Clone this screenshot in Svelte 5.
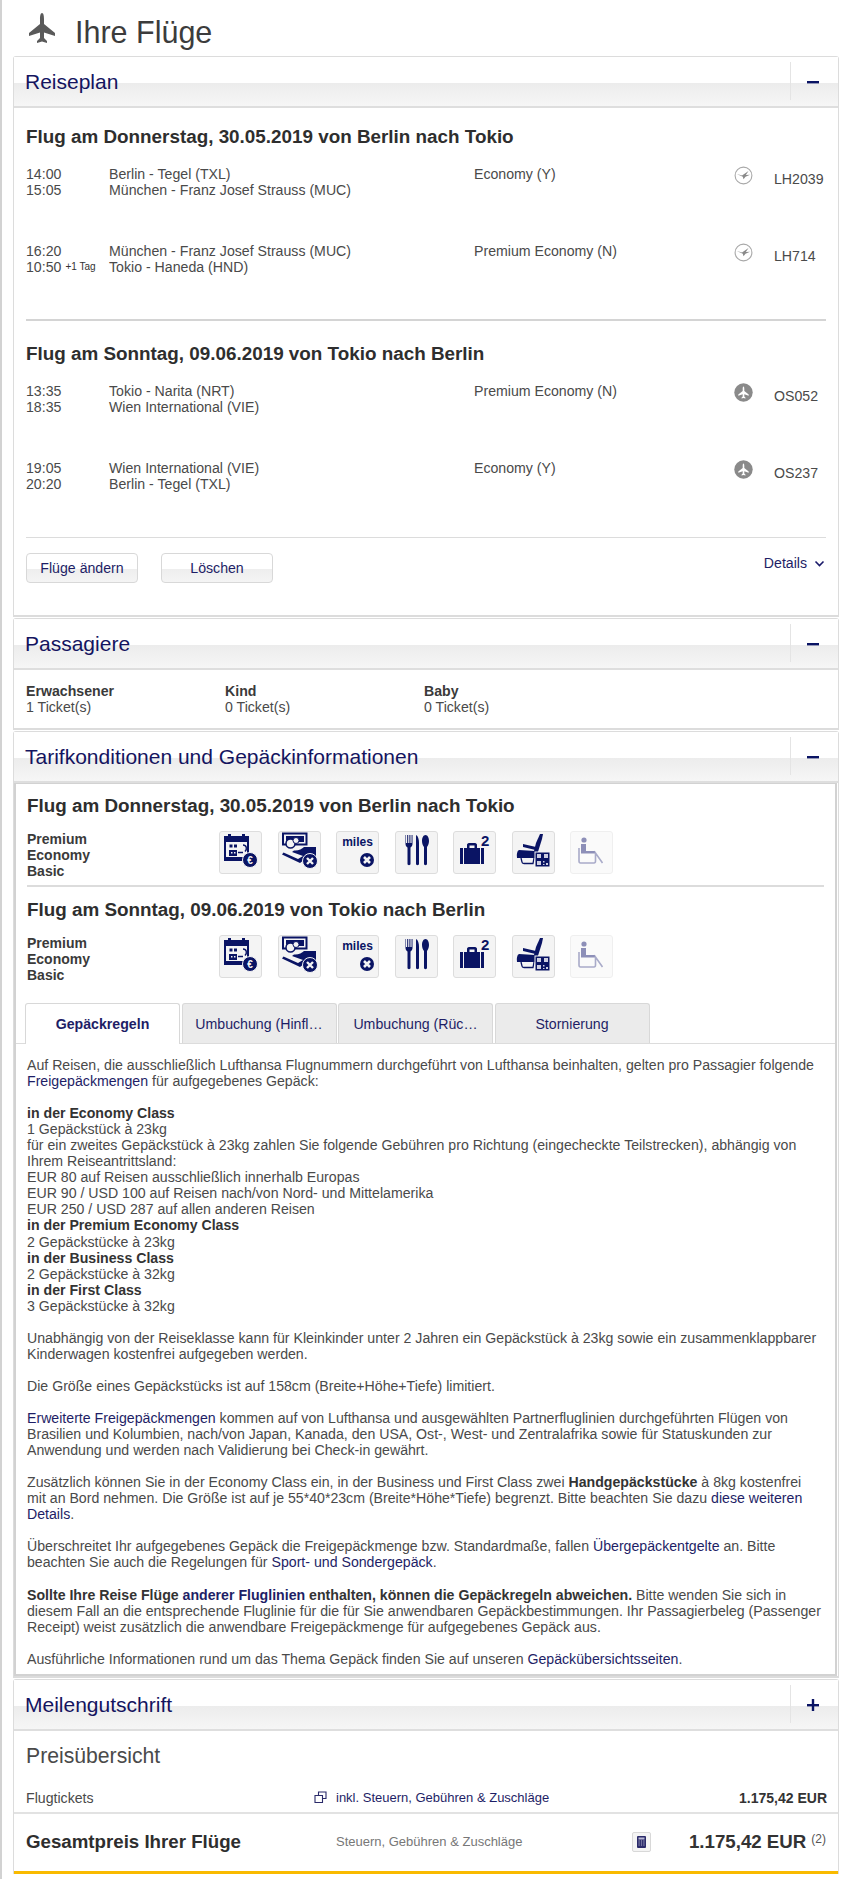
<script lang="ts">
	// Flight summary page: itinerary, passengers, fare rules, price
	const outbound = [
		{ dep: '14:00', arr: '15:05', from: 'Berlin - Tegel (TXL)', to: 'München - Franz Josef Strauss (MUC)', cabin: 'Economy (Y)', no: 'LH2039', carrier: 'lh' },
		{ dep: '16:20', arr: '10:50', plus: '+1 Tag', from: 'München - Franz Josef Strauss (MUC)', to: 'Tokio - Haneda (HND)', cabin: 'Premium Economy (N)', no: 'LH714', carrier: 'lh' }
	];
	const inbound = [
		{ dep: '13:35', arr: '18:35', from: 'Tokio - Narita (NRT)', to: 'Wien International (VIE)', cabin: 'Premium Economy (N)', no: 'OS052', carrier: 'os' },
		{ dep: '19:05', arr: '20:20', from: 'Wien International (VIE)', to: 'Berlin - Tegel (TXL)', cabin: 'Economy (Y)', no: 'OS237', carrier: 'os' }
	];
	const passengers = [
		{ label: 'Erwachsener', count: '1 Ticket(s)' },
		{ label: 'Kind', count: '0 Ticket(s)' },
		{ label: 'Baby', count: '0 Ticket(s)' }
	];
	const tabs = ['Gepäckregeln', 'Umbuchung (Hinfl…', 'Umbuchung (Rüc…', 'Stornierung'];
	const planePath = 'M13 0C14.5 0 15 3 15 6V11L26 20V23L15 19.5V25L18 28V30L13 28.5 8 30V28L11 25V19.5L0 23V20L11 11V6C11 3 11.5 0 13 0Z';
</script>

{#snippet panelHead(title, sign)}
	<div class="panel-head">
		<h2>{title}</h2>
		<div class="toggle">
			<svg width="14" height="14" viewBox="0 0 14 14">
				<rect x="1" y="6" width="12" height="2.4" fill="#0a1464" />
				{#if sign === '+'}<rect x="5.8" y="1" width="2.4" height="12" fill="#0a1464" />{/if}
			</svg>
		</div>
	</div>
{/snippet}

{#snippet flightRows(rows)}
	<div class="flight-rows">
		{#each rows as r}
			<div class="flight-row">
				<div class="times">
					<div>{r.dep}</div>
					<div>{r.arr}{#if r.plus}<span class="plus">{r.plus}</span>{/if}</div>
				</div>
				<div>
					<div>{r.from}</div>
					<div>{r.to}</div>
				</div>
				<div>{r.cabin}</div>
				<div class="logo">
					{#if r.carrier === 'lh'}
						<svg width="19" height="19" viewBox="0 0 19 19">
							<circle cx="9.5" cy="9.5" r="8.4" fill="#fff" stroke="#a8a8a8" stroke-width="1.1" />
							<path d="M2.8 8 8 9.6 14.500 5 11.800 9 16 8.800 11.500 10.800 9.500 13.200 8.800 10.800Z" fill="#8a8a8a" />
						</svg>
					{:else}
						<svg width="19" height="19" viewBox="0 0 19 19">
							<circle cx="9.5" cy="9.5" r="9.2" fill="#8a8a8a" />
							<path d={planePath} fill="#fff" transform="translate(4.3 3.5) scale(.4)" />
						</svg>
					{/if}
				</div>
				<div class="flight-no">{r.no}</div>
			</div>
		{/each}
	</div>
{/snippet}

{#snippet fareIcons()}
	<div class="fare-icons">
		<div class="fare-icon">
			<svg viewBox="0 0 43 43">
				<path d="M5 5H9V3H12V5H23V3H26V5H30V24H25V30H5Z" fill="#0a1464" />
				<rect x="7" y="11" width="21" height="15" fill="#f4f4f4" />
				<rect x="10.500" y="13.500" width="3" height="3" fill="#0a1464" /><rect x="15" y="13.500" width="3" height="3" fill="#0a1464" />
				<path d="M10 19H18V25H10Z" fill="#0a1464" />
				<rect x="12" y="21" width="1.500" height="1.500" fill="#f4f4f4" /><rect x="15" y="21" width="1.500" height="1.500" fill="#f4f4f4" />
				<path d="M19 21.500h5M24 14c3.500 0 4.500 4 2 6.500" fill="none" stroke="#0a1464" stroke-width="1.400" />
				<circle cx="31" cy="29" r="7.500" fill="#0a1464" stroke="#f4f4f4" />
				<text x="31" y="32.800" class="euro">€</text>
			</svg>
		</div>
		<div class="fare-icon">
			<svg viewBox="0 0 43 43">
				<path d="M5 2.500h23.500v11H5Z" fill="none" stroke="#0a1464" stroke-width="2" />
				<rect x="8" y="5" width="18" height="6" fill="#0a1464" />
				<circle cx="12.500" cy="12.500" r="4.500" fill="#f4f4f4" stroke="#0a1464" stroke-width="1.500" />
				<circle cx="18" cy="9.500" r="3" fill="#f4f4f4" stroke="#0a1464" stroke-width="1" />
				<path d="M38 16V26H30L22 32 4 23.500 5.500 21.500 20 28 25 25 14 21 16 19.500C20 20 24 18 26 16Z" fill="#0a1464" />
				<circle cx="32" cy="30" r="7.500" fill="#0a1464" stroke="#f4f4f4" />
				<path d="M29 27l6 6M35 27l-6 6" stroke="#f4f4f4" stroke-width="2.400" />
			</svg>
		</div>
		<div class="fare-icon">
			<svg viewBox="0 0 43 43">
				<text x="21.500" y="15" class="miles">miles</text>
				<circle cx="31" cy="29" r="7" fill="#0a1464" />
				<path d="M28 26l6 6M34 26l-6 6" stroke="#f4f4f4" stroke-width="2.600" />
			</svg>
		</div>
		<div class="fare-icon">
			<svg viewBox="0 0 43 43">
				<path d="M11 4v8h1.200V4h1V12h1.200V4h1V12h1.200V4h.9v9c0 2-1.300 3-2 3.500V33c0 1.500-3 1.500-3 0V16.500c-.8-.5-2-1.500-2-3.500V4Z" fill="#0a1464" />
				<path d="M21 4c2 1 3 4 3 8v21c0 1.500-3 1.500-3 0Z" fill="#0a1464" />
				<path d="M30.500 4c2.200 0 3.500 3 3.500 6s-1.300 5-2 6v17c0 1.500-3 1.500-3 0V16c-.8-1-2-3-2-6s1.300-6 3.500-6Z" fill="#0a1464" />
			</svg>
		</div>
		<div class="fare-icon">
			<svg viewBox="0 0 43 43">
				<path d="M14 17v-3c0-1 .7-2 2-2h6c1.300 0 2 1 2 2v3h7v16H7V17Zm2.500 0h5v-2.500h-5Z" fill="#0a1464" fill-rule="evenodd" />
				<path d="M10.500 17v16M27.500 17v16" stroke="#f4f4f4" stroke-width="1" />
				<text x="28" y="15" class="two">2</text>
			</svg>
		</div>
		<div class="fare-icon">
			<svg viewBox="0 0 43 43">
				<path d="M28 3H31L30 8 25 24H21L24 12Z" fill="#0a1464" />
				<path d="M11 13 24 16 23.500 19 11 16Z" fill="#0a1464" />
				<path d="M7 19 23 20V27H5C4.500 23 5 20 7 19Z" fill="#0a1464" />
				<path d="M9 27 10 31C10 32 11 32.500 12 32.500H21L22 27" fill="none" stroke="#0a1464" stroke-width="1.300" />
				<rect x="23" y="21" width="15" height="15" fill="#0a1464" stroke="#f4f4f4" />
				<path d="M25 23h4v4h-4ZM32 23h4v4h-4ZM25 30h4v4h-4ZM31 30h1.500v1.500H31ZM34 32h2v2h-2ZM31 33h1.500v1H31Z" fill="#cfd0e2" />
			</svg>
		</div>
		<div class="fare-icon off">
			<svg viewBox="0 0 43 43">
				<circle cx="14" cy="9" r="2.600" fill="#8d8fb8" />
				<path d="M11 13h5v7h9v2.500H11Z" fill="#8d8fb8" />
				<path d="M9 17v13c0 1 .5 2 1.500 2H24c1 0 1.500-1 1.500-2v-8l7 10" fill="none" stroke="#a9abc9" stroke-width="1.600" />
			</svg>
		</div>
	</div>
{/snippet}

<div class="page">
	<header class="page-title">
		<svg width="26" height="30" viewBox="0 0 26 30"><path d={planePath} fill="#5a5a5a" /></svg>
		<h1>Ihre Flüge</h1>
	</header>

	<section class="panel">
		{@render panelHead('Reiseplan', '-')}
		<div class="plan">
			<h3>Flug am Donnerstag, 30.05.2019 von Berlin nach Tokio</h3>
			{@render flightRows(outbound)}
			<hr class="thick" />
			<h3>Flug am Sonntag, 09.06.2019 von Tokio nach Berlin</h3>
			{@render flightRows(inbound)}
			<hr class="thin" />
			<div class="actions">
				<button>Flüge ändern</button>
				<button>Löschen</button>
				<a class="details">Details
					<svg width="11" height="8" viewBox="0 0 11 8"><path d="M1.500 1.500 5.500 5.500 9.500 1.500" fill="none" stroke="#1a1a6a" stroke-width="1.600" /></svg>
				</a>
			</div>
		</div>
	</section>

	<section class="panel">
		{@render panelHead('Passagiere', '-')}
		<div class="pax">
			{#each passengers as p}
				<div><strong>{p.label}</strong><br />{p.count}</div>
			{/each}
		</div>
	</section>

	<section class="panel">
		{@render panelHead('Tarifkonditionen und Gepäckinformationen', '-')}
		<div class="fare">
			<h3>Flug am Donnerstag, 30.05.2019 von Berlin nach Tokio</h3>
			<div class="fare-row">
				<div class="fare-name">Premium<br />Economy<br />Basic</div>
				{@render fareIcons()}
			</div>
			<hr class="thin fare-rule" />
			<h3>Flug am Sonntag, 09.06.2019 von Tokio nach Berlin</h3>
			<div class="fare-row">
				<div class="fare-name">Premium<br />Economy<br />Basic</div>
				{@render fareIcons()}
			</div>

			<div class="tabs">
				{#each tabs as t, i}
					<div class="tab" class:active={i === 0}>{t}</div>
				{/each}
			</div>

			<div class="rules">
				<p>Auf Reisen, die ausschließlich Lufthansa Flugnummern durchgeführt von Lufthansa beinhalten, gelten pro Passagier folgende <a>Freigepäckmengen</a> für aufgegebenes Gepäck:</p>
				<p>
					<b>in der Economy Class</b><br />
					1 Gepäckstück à 23kg<br />
					für ein zweites Gepäckstück à 23kg zahlen Sie folgende Gebühren pro Richtung (eingecheckte Teilstrecken), abhängig von Ihrem Reiseantrittsland:<br />
					EUR 80 auf Reisen ausschließlich innerhalb Europas<br />
					EUR 90 / USD 100 auf Reisen nach/von Nord- und Mittelamerika<br />
					EUR 250 / USD 287 auf allen anderen Reisen<br />
					<b>in der Premium Economy Class</b><br />
					2 Gepäckstücke à 23kg<br />
					<b>in der Business Class</b><br />
					2 Gepäckstücke à 32kg<br />
					<b>in der First Class</b><br />
					3 Gepäckstücke à 32kg
				</p>
				<p>Unabhängig von der Reiseklasse kann für Kleinkinder unter 2 Jahren ein Gepäckstück à 23kg sowie ein zusammenklappbarer Kinderwagen kostenfrei aufgegeben werden.</p>
				<p>Die Größe eines Gepäckstücks ist auf 158cm (Breite+Höhe+Tiefe) limitiert.</p>
				<p><a>Erweiterte Freigepäckmengen</a> kommen auf von Lufthansa und ausgewählten Partnerfluglinien durchgeführten Flügen von Brasilien und Kolumbien, nach/von Japan, Kanada, den USA, Ost-, West- und Zentralafrika sowie für Statuskunden zur Anwendung und werden nach Validierung bei Check-in gewährt.</p>
				<p>Zusätzlich können Sie in der Economy Class ein, in der Business und First Class zwei <b>Handgepäckstücke</b> à 8kg kostenfrei mit an Bord nehmen. Die Größe ist auf je 55*40*23cm (Breite*Höhe*Tiefe) begrenzt. Bitte beachten Sie dazu <a>diese weiteren Details</a>.</p>
				<p>Überschreitet Ihr aufgegebenes Gepäck die Freigepäckmenge bzw. Standardmaße, fallen <a>Übergepäckentgelte</a> an. Bitte beachten Sie auch die Regelungen für <a>Sport- und Sondergepäck</a>.</p>
				<p><b>Sollte Ihre Reise Flüge <a>anderer Fluglinien</a> enthalten, können die Gepäckregeln abweichen.</b> Bitte wenden Sie sich in diesem Fall an die entsprechende Fluglinie für die für Sie anwendbaren Gepäckbestimmungen. Ihr Passagierbeleg (Passenger Receipt) weist zusätzlich die anwendbare Freigepäckmenge für aufgegebenes Gepäck aus.</p>
				<p>Ausführliche Informationen rund um das Thema Gepäck finden Sie auf unseren <a>Gepäckübersichtsseiten</a>.</p>
			</div>
		</div>
	</section>

	<section class="panel last">
		{@render panelHead('Meilengutschrift', '+')}
		<div class="price">
			<h4>Preisübersicht</h4>
			<div class="price-row">
				<span class="price-label">Flugtickets</span>
				<span class="price-note">
					<svg width="13" height="13" viewBox="0 0 13 13"><path d="M4.500 4V1H12V7.500H9M1 4.500H8.500V11.500H1Z" fill="none" stroke="#2a2a6a" stroke-width="1.100" /></svg>
					<a>inkl. Steuern, Gebühren &amp; Zuschläge</a>
				</span>
				<b class="price-amount">1.175,42 EUR</b>
			</div>
			<div class="total-row">
				<b class="total-label">Gesamtpreis Ihrer Flüge</b>
				<span class="total-note">Steuern, Gebühren &amp; Zuschläge</span>
				<span class="calc">
					<svg width="9" height="12" viewBox="0 0 9 12"><rect width="9" height="12" rx="1" fill="#2a2a6a" /><rect x="1.500" y="1.500" width="6" height="2" fill="#b9b9d4" /><path d="M1.500 5h6M1.500 7h6M1.500 9h6" stroke="#b9b9d4" stroke-dasharray="1.200 1.200" /></svg>
				</span>
				<b class="total-amount">1.175,42 EUR</b><span class="ref">(2)</span>
			</div>
		</div>
	</section>
</div>

<style>
	:global(body) {
		margin: 0;
		background: #fff;
	}

	.page {
		box-sizing: border-box;
		width: 850px;
		height: 1879px;
		padding: 0 11px 0 11px;
		border-left: 2px solid #d2d2d2;
		font-family: 'Liberation Sans', Arial, sans-serif;
		font-size: 14.15px;
		line-height: 16px;
		color: #4a4a4a;
	}

	.page-title {
		display: flex;
		align-items: center;
		gap: 20px;
		height: 56px;
		padding-left: 16px;
		box-sizing: border-box;
	}

	h1 {
		margin: 8px 0 0;
		font-size: 30.5px;
		font-weight: 400;
		line-height: 34px;
		color: #3c3c3c;
	}

	.panel {
		width: 826px;
		box-sizing: border-box;
		margin-bottom: 1px;
		border: 1px solid #dcdcdc;
		border-bottom-width: 2px;
		border-radius: 3px 3px 0 0;
		background: #fff;
	}

	.panel.last {
		border-bottom: 0;
	}

	.panel-head {
		display: flex;
		justify-content: space-between;
		height: 51px;
		box-sizing: border-box;
		padding-left: 11px;
		border-bottom: 2px solid #dedede;
		background: linear-gradient(#fff 0, #fff 26px, #ececec 26px, #f6f6f6 100%);
	}

	h2 {
		margin: 0;
		padding-top: 13px;
		font-size: 21px;
		font-weight: 400;
		line-height: 24px;
		color: #14145f;
	}

	.toggle {
		display: flex;
		align-items: flex-start;
		justify-content: center;
		width: 48px;
		height: 38px;
		margin-top: 5px;
		padding: 13px 4px 0 0;
		box-sizing: border-box;
		border-left: 1px solid #e4e4e4;
	}

	.plan {
		padding: 19px 12px 0;
		height: 507px;
		box-sizing: border-box;
	}

	h3 {
		margin: 0;
		font-size: 18.85px;
		font-weight: 700;
		line-height: 20px;
		color: #2e2e2e;
	}

	.flight-rows {
		padding-top: 19px;
	}

	.flight-row {
		display: grid;
		grid-template-columns: 83px 365px 261px 40px auto;
		height: 76.5px;
	}

	.plus {
		margin-left: 4px;
		font-size: 10px;
		vertical-align: 2px;
		color: #333;
	}

	.logo {
		margin-left: -1px;
	}

	.flight-no {
		margin-top: 5px;
		margin-left: -1px;
	}

	hr {
		margin: 0;
		border: 0;
	}

	.thick {
		height: 2px;
		margin-bottom: 23px;
		background: #d4d4d4;
	}

	.thin {
		height: 1px;
		background: #dcdcdc;
	}

	.plan .thin {
		margin-top: 1px;
	}

	.actions {
		display: flex;
		gap: 23px;
		padding-top: 15px;
	}

	button {
		width: 112px;
		height: 30px;
		padding: 0;
		border: 1px solid #d8d8d8;
		border-radius: 4px;
		background: linear-gradient(#fff 0, #fff 15px, #eeeeee 15px, #f4f4f4 100%);
		font: inherit;
		color: #1e1e66;
	}

	.details {
		margin-left: auto;
		margin-top: 2px;
		padding-right: 1px;
		color: #1e1e66;
	}

	.details svg {
		margin-left: 3px;
	}

	.pax {
		display: grid;
		grid-template-columns: repeat(3, 199px);
		padding: 13px 12px 13px;
		height: 58px;
		box-sizing: border-box;
	}

	.pax strong {
		color: #3a3a3a;
	}

	.fare {
		margin: 0 1px 0 0;
		padding-top: 12px;
		border: 2px solid #d2d2d2;
		border-top-width: 1px;
		box-sizing: border-box;
	}

	.fare h3 {
		padding: 0 11px;
	}

	.fare-row {
		display: flex;
		padding: 15px 11px 0;
	}

	.fare-name {
		width: 192px;
		height: 43px;
		font-size: 14px;
		font-weight: 700;
		color: #3a3a3a;
	}

	.fare-icons {
		display: flex;
		gap: 15.500px;
	}

	.fare-icon {
		width: 43px;
		height: 43px;
		box-sizing: border-box;
		border: 1px solid #dddddd;
		border-radius: 3px;
		background: #f4f4f4;
	}

	.fare-icon.off {
		background: #fafafa;
		border-color: #efefef;
	}

	.fare-icon svg {
		display: block;
		width: 43px;
		height: 43px;
		margin: -1px;
	}

	.euro {
		font-size: 10px;
		font-weight: 700;
		text-anchor: middle;
		fill: #f4f4f4;
	}

	.miles {
		font-size: 12px;
		font-weight: 700;
		text-anchor: middle;
		fill: #0a1464;
	}

	.two {
		font-size: 15px;
		font-weight: 700;
		fill: #0a1464;
	}

	.fare-rule {
		height: 2px;
		margin: 11px 11px 13px;
	}

	.tabs {
		display: flex;
		gap: 1.500px;
		margin-top: 25px;
		padding-left: 9px;
		border-bottom: 1px solid #dcdcdc;
	}

	.tab {
		width: 155px;
		height: 40px;
		box-sizing: border-box;
		line-height: 40px;
		text-align: center;
		border: 1px solid #d8d8d8;
		border-bottom: 0;
		border-radius: 3px 3px 0 0;
		background: #ebebeb;
		color: #1e1e66;
	}

	.tab.active {
		background: #fff;
		font-weight: 700;
		margin-bottom: -1px;
		height: 41px;
	}

	.rules {
		padding: 13px 13px 7px 11px;
		line-height: 16.05px;
	}

	.rules p {
		margin: 0 0 16.05px;
	}

	.rules p:last-child {
		margin-bottom: 0;
	}

	.rules a {
		color: #1e1e66;
	}

	.rules b {
		color: #333;
	}

	.price {
		height: 143px;
		box-sizing: border-box;
		border-bottom: 3px solid #f9ba00;
	}

	h4 {
		margin: 0;
		padding: 13px 12px 0;
		font-size: 21.2px;
		font-weight: 400;
		line-height: 24px;
		color: #4a4a4a;
	}

	.price-row {
		display: flex;
		align-items: center;
		height: 30px;
		margin-top: 16px;
		padding: 0 11px 0 12px;
		border-bottom: 2px solid #e2e2e2;
		box-sizing: border-box;
	}

	.price-label {
		width: 288px;
	}

	.price-note {
		display: flex;
		align-items: center;
		gap: 9px;
		flex: 1;
		font-size: 13px;
	}

	.price-note a {
		color: #1e1e66;
	}

	.price-amount {
		font-size: 14px;
		color: #333;
	}

	.total-row {
		display: flex;
		align-items: center;
		height: 56px;
		padding: 0 12px;
	}

	.total-label {
		width: 310px;
		font-size: 18.7px;
		color: #2e2e2e;
	}

	.total-note {
		width: 296px;
		font-size: 13px;
		color: #777;
	}

	.calc {
		display: flex;
		align-items: center;
		justify-content: center;
		width: 19px;
		height: 20px;
		box-sizing: border-box;
		border: 1px solid #d8d8d8;
		border-radius: 2px;
		background: #f4f4f4;
	}

	.total-amount {
		margin-left: auto;
		font-size: 18.7px;
		color: #333;
	}

	.ref {
		margin-left: 5px;
		margin-top: -6px;
		font-size: 12px;
		color: #555;
	}
</style>
